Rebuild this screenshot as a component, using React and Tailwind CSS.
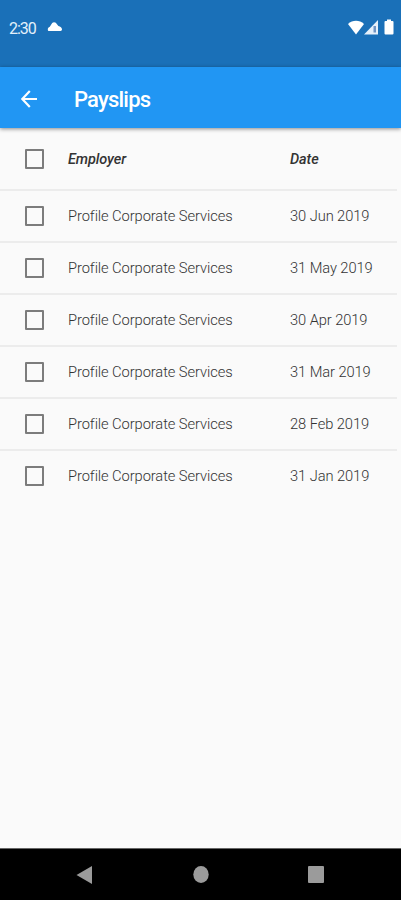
import { useState } from "react";

const payslips = [
  { id: 1, employer: "Profile Corporate Services", date: "30 Jun 2019" },
  { id: 2, employer: "Profile Corporate Services", date: "31 May 2019" },
  { id: 3, employer: "Profile Corporate Services", date: "30 Apr 2019" },
  { id: 4, employer: "Profile Corporate Services", date: "31 Mar 2019" },
  { id: 5, employer: "Profile Corporate Services", date: "28 Feb 2019" },
  { id: 6, employer: "Profile Corporate Services", date: "31 Jan 2019" },
];

function StatusBar() {
  return (
    <div className="flex h-[67px] shrink-0 items-start bg-[#1a70b8] pt-[18px] pl-[9px] pr-[7px] text-white">
      <span className="w-[28px] whitespace-nowrap pt-px text-[16px] leading-5 tracking-[-1px] text-[#e4f0fb]">2:30</span>
      <svg className="mt-[3px] ml-[10px] h-[11px] w-[16px]" viewBox="0 0 16 11" fill="currentColor">
        <path d="M2.300 10C1.200 10 .8 9.300.8 8.400 .8 7 1.600 6.200 2.800 5.700L5.200 2C6 1 7.800.9 8.800 1.800L11.400 5C13.400 5.400 15 6.800 15 8.600 15 9.500 14.400 10 13.500 10Z" />
      </svg>
      <div className="ml-auto flex items-start">
        {/* wifi */}
        <svg className="mt-[2px] h-[15px] w-[16px]" viewBox="0 0 16 15" fill="currentColor">
          <path d="M0 4C4.500-.4 11.500-.4 16 4L8 14.500Z" />
        </svg>
        {/* mobile signal */}
        <svg className="mt-[2px] h-[15px] w-[14px]" viewBox="0 0 14 15">
          <path d="M14 0V14.500H0Z" fill="#e6f0fa" />
          <path d="M9.500 6H12V12.500H9.500Z" fill="#6f94c4" />
        </svg>
        {/* battery */}
        <svg className="mt-[1px] ml-[6px] h-[16px] w-[10px]" viewBox="0 0 10 16" fill="currentColor">
          <path d="M3 .5H7V2H8.500Q9.500 2 9.500 3V14.500Q9.500 15.500 8.500 15.500H1.500Q.5 15.500.5 14.500V3Q.5 2 1.500 2H3Z" />
        </svg>
      </div>
    </div>
  );
}

function Header() {
  return (
    <header className="z-10 flex h-[61px] shrink-0 items-center bg-[#2196f3] pt-[3px] pl-[20px] text-white shadow-[0_1px_4px_rgba(0,0,0,0.45)]">
      <button className="h-[18px] w-[18px]" aria-label="Back">
        <svg className="h-[18px] w-[18px]" viewBox="0 0 18 18" fill="none" stroke="currentColor" strokeWidth="2.2">
          <path d="M17 9H2.500M9.800 1L2.300 9L9.800 17" />
        </svg>
      </button>
      <h1 className="ml-[36px] pt-px text-[22px] font-medium leading-6 tracking-[-0.8px]">Payslips</h1>
    </header>
  );
}

function Checkbox({ checked, onChange, label }) {
  return (
    <input
      type="checkbox"
      aria-label={label}
      checked={checked}
      onChange={onChange}
      className="h-[20px] w-[19px] shrink-0 appearance-none rounded-[1px] border-2 border-[#7c7c7c] checked:bg-[#2196f3]"
    />
  );
}

function NavigationBar() {
  return (
    <nav className="flex h-[52px] shrink-0 items-center border-t border-[#666] bg-black pl-[76px] text-[#9b9b9b]">
      <svg className="h-[18px] w-[16px]" viewBox="0 0 16 18" fill="currentColor">
        <path d="M.5 9L16 0V18Z" />
      </svg>
      <svg className="ml-[101px] h-[17px] w-[16px]" viewBox="0 0 16 17" fill="currentColor">
        <ellipse cx="8" cy="8.500" rx="7.700" ry="8.400" />
      </svg>
      <span className="ml-[99px] h-[17px] w-[16px] rounded-[1px] bg-current" />
    </nav>
  );
}

export default function App() {
  const [selected, setSelected] = useState([]);

  const toggle = (id) => {
    setSelected(selected.includes(id) ? selected.filter((s) => s !== id) : [...selected, id]);
  };

  const allSelected = selected.length === payslips.length;

  return (
    <div className="flex h-[900px] w-[401px] flex-col overflow-hidden bg-[#fafafa] font-[Roboto,sans-serif]">
      <StatusBar />
      <Header />
      <main className="flex-1 pr-[4px]">
        <div className="flex h-[63px] items-center border-b-2 border-[#ececec] pl-[25px] text-[14.5px] font-medium italic tracking-[-0.1px] text-[#333]">
          <Checkbox
            label="Select all"
            checked={allSelected}
            onChange={() => setSelected(allSelected ? [] : payslips.map((p) => p.id))}
          />
          <span className="ml-[24px] w-[222px] pt-[3px]">Employer</span>
          <span className="pt-[3px]">Date</span>
        </div>
        {payslips.map((p) => (
          <div
            key={p.id}
            className="flex h-[52px] items-center border-b-2 border-[#ececec] pl-[25px] text-[14.7px] font-light tracking-[-0.08px] text-[#333] last:border-b-transparent"
          >
            <Checkbox label={p.date} checked={selected.includes(p.id)} onChange={() => toggle(p.id)} />
            <span className="ml-[24px] w-[222px] pt-px">{p.employer}</span>
            <span className="pt-px">{p.date}</span>
          </div>
        ))}
      </main>
      <NavigationBar />
    </div>
  );
}
